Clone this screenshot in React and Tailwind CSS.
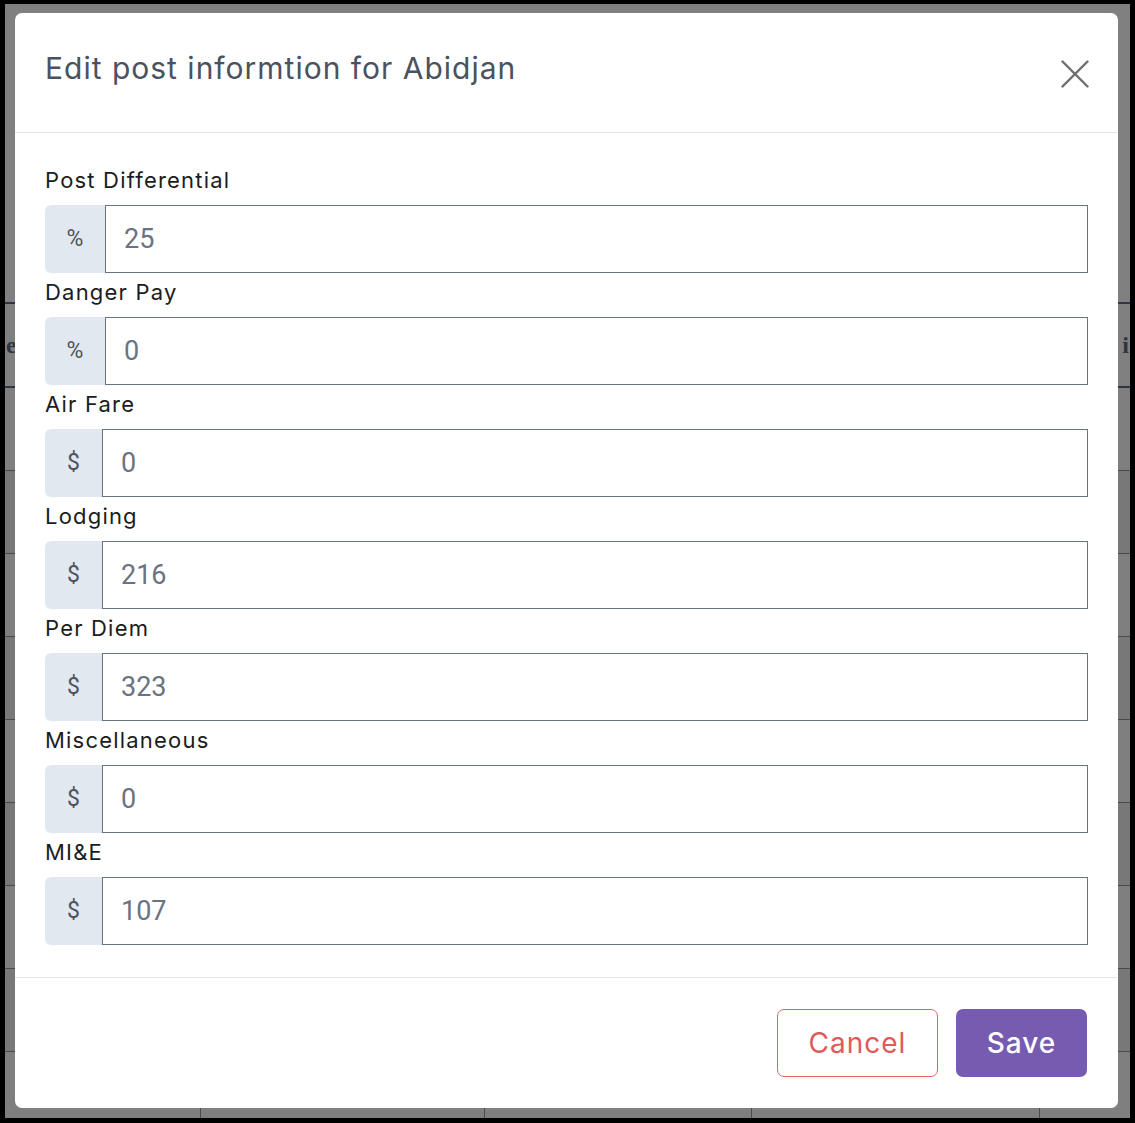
import React from 'react';

const fields = [
    { label: 'Post Differential', unit: '%', value: '25' },
    { label: 'Danger Pay', unit: '%', value: '0' },
    { label: 'Air Fare', unit: '$', value: '0' },
    { label: 'Lodging', unit: '$', value: '216' },
    { label: 'Per Diem', unit: '$', value: '323' },
    { label: 'Miscellaneous', unit: '$', value: '0' },
    { label: 'MI&E', unit: '$', value: '107' },
];

const rowShades = ['bg-[#7f7f7f]', 'bg-[#787878]'];

const App = () => {
    return (
        <div className="relative w-[1135px] h-[1123px] overflow-hidden border-t-4 border-l-[5px] border-r-[5px] border-b-[5px] border-black bg-[#808080] font-['Inter',sans-serif]">
            {/* Page table behind the backdrop */}
            <div className="flex flex-col">
                <div className="h-[298px]" />
                <div className="flex h-[86px] items-center justify-between border-y-2 border-[#2d3446] pl-[1px] pr-[1px] font-['Liberation_Serif',serif] text-[24px] font-bold text-[#2e3440]">
                    <span>e</span>
                    <span>i</span>
                </div>
                {Array.from({ length: 9 }).map((_, i) => (
                    <div
                        key={i}
                        className={`grid h-[83px] grid-cols-[196px_284px_267px_288px_1fr] border-b border-[#4a4a4a] ${rowShades[i % 2]}`}
                    >
                        <div className="border-r border-[#4a4a4a]" />
                        <div className="border-r border-[#4a4a4a]" />
                        <div className="border-r border-[#4a4a4a]" />
                        <div className="border-r border-[#4a4a4a]" />
                        <div />
                    </div>
                ))}
            </div>

            {/* Modal */}
            <div className="absolute left-[10px] top-[9px] flex h-[1095px] w-[1103px] flex-col rounded-[7px] bg-white">
                {/* Header */}
                <div className="flex h-[120px] items-start justify-between border-b border-[#e3e7ec] pl-[30px] pr-[29px] pt-[37px]">
                    <h3 className="text-[30px] leading-[36px] font-normal tracking-[1px] text-[#4a5260]">
                        Edit post informtion for Abidjan
                    </h3>
                    <button className="mt-[10px] text-[#6e6e6e]">
                        <svg width="28" height="28" viewBox="0 0 28 28" fill="none" stroke="currentColor" strokeWidth="2.4" strokeLinecap="round">
                            <line x1="1.5" y1="1.5" x2="26.5" y2="26.5" />
                            <line x1="26.5" y1="1.5" x2="1.5" y2="26.5" />
                        </svg>
                    </button>
                </div>

                {/* Body */}
                <div className="flex flex-col gap-[4px] border-b border-[#e3e7ec] pb-[32px] pl-[30px] pr-[30px] pt-[32px]">
                    {fields.map((f) => (
                        <div key={f.label} className="flex flex-col">
                            <label className="mb-[10px] text-[22px] leading-[30px] tracking-[1.2px] text-[#1c1c1c]">{f.label}</label>
                            <div className="flex h-[68px]">
                                <div className={`flex items-center justify-center rounded-l-[6px] bg-[#e2e8f0] font-['Roboto',sans-serif] text-[23px] text-[#4b5563] ${f.unit === '%' ? 'w-[60px]' : 'w-[57px]'}`}>
                                    {f.unit}
                                </div>
                                <div className="flex flex-1 items-center border-[1.5px] border-[#6b7280] pl-[18px] font-['Roboto',sans-serif] text-[27px] text-[#6b7280]">
                                    {f.value}
                                </div>
                            </div>
                        </div>
                    ))}
                </div>

                {/* Footer */}
                <div className="flex flex-1 items-start justify-end gap-[18px] pr-[31px] pt-[31px]">
                    <button className="flex h-[68px] w-[161px] items-center justify-center rounded-[7px] border-[1.5px] border-[#e06666] text-[28px] tracking-[1px] text-[#e05a5a]">
                        Cancel
                    </button>
                    <button className="flex h-[68px] w-[131px] items-center justify-center rounded-[7px] bg-[#765bb1] text-[28px] font-medium tracking-[1px] text-white">
                        Save
                    </button>
                </div>
            </div>
        </div>
    );
};

export default App;
